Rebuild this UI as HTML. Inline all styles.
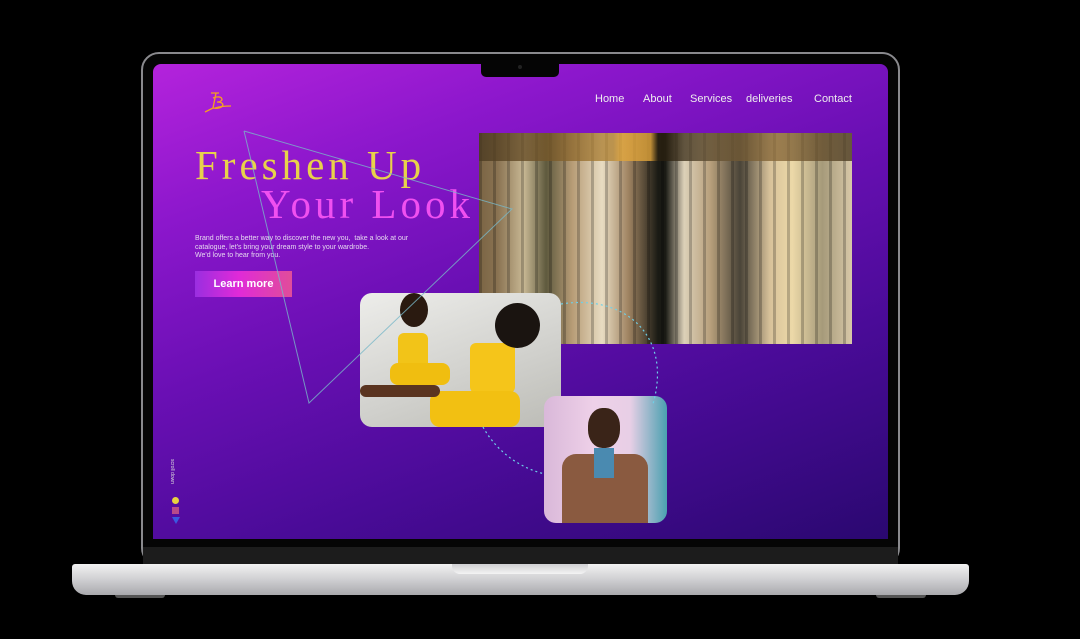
<!DOCTYPE html>
<html><head><meta charset="utf-8"><style>
*{margin:0;padding:0;box-sizing:border-box}
body{width:1080px;height:639px;background:#000;position:relative;overflow:hidden;font-family:"Liberation Sans",sans-serif}
.abs{position:absolute}
.bezel{left:141px;top:52px;width:759px;height:514px;border-radius:18px;background:#050505;border:2px solid #8a8a8e}
.screen{left:153px;top:64px;width:735px;height:475px;border-radius:8px 8px 0 0;overflow:hidden;
background:linear-gradient(160deg,#b423dc 0%,#8c17cc 22%,#6a0fb4 45%,#4a0b98 70%,#2a0870 100%)}
.chin{left:143px;top:547px;width:755px;height:17px;background:#1c1c1c}
.base{left:72px;top:564px;width:897px;height:31px;border-radius:3px 3px 14px 14px;background:linear-gradient(#f2f2f2,#cfcfd2 50%,#a9a9ad)}
.notch{left:452px;top:564px;width:136px;height:10px;background:linear-gradient(#cfcfd2,#f4f4f4);border-radius:0 0 8px 8px}
.cam{left:481px;top:62px;width:78px;height:15px;background:#050505;border-radius:0 0 5px 5px}
.nav{top:29px;color:#eee;font-size:11px;font-family:"Liberation Sans",sans-serif;z-index:5}
h1{position:absolute;font-family:"Liberation Serif",serif;font-weight:normal;font-size:41px;letter-spacing:4px;z-index:3;white-space:nowrap}
.p{left:42px;top:171px;color:#e6d8f0;font-size:7px;line-height:8.5px;font-family:"Liberation Sans",sans-serif}
.btn{left:42px;top:207px;width:97px;height:26px;background:linear-gradient(90deg,#9a2ee0,#e02ad8 45%,#e04d9a);color:#fff;font-size:11px;font-weight:bold;text-align:center;line-height:26px}
.clothes{left:326px;top:69px;width:373px;height:211px;background:
repeating-linear-gradient(90deg,rgba(0,0,0,.22) 0 3px,transparent 3px 14px),
linear-gradient(90deg,#7a6444 0%,#8a7352 5%,#c8b894 12%,#5f5a3e 18%,#b79c76 25%,#e8dcc2 33%,#a08462 40%,#1a1a14 48%,#1a1a14 50%,#dcd0b8 55%,#b8a07c 62%,#4a4438 70%,#d8c29a 78%,#ecd9a8 84%,#a69a7a 92%,#d8c8a8 100%)}
.clothes:before{content:"";position:absolute;left:0;top:0;right:0;height:28px;background:linear-gradient(90deg,#4a3a22,#7a5a2a 20%,#b88a3a 36%,#e0a43a 38%,#e0a43a 46%,#2a2010 48%,#2a2010 50%,#5a4a30 60%,#8a6a3a 80%,#4a3a22);opacity:.8}
.women{left:207px;top:229px;width:201px;height:134px;border-radius:12px;overflow:hidden;background:linear-gradient(160deg,#ededea,#d0d0cc 60%,#bcbcb6)}
.man{left:391px;top:332px;width:123px;height:127px;border-radius:12px;overflow:hidden;background:linear-gradient(90deg,#d9b8d9,#eed0e8 40%,#e8cfe6 70%,#4aa0b0)}
</style></head><body>
<div class="abs bezel"></div>
<div class="abs screen">
 <svg class="abs" style="left:0;top:0;z-index:4" width="735" height="475">
  <polyline points="91,67 359,145 156,339 91,67" fill="none" stroke="#79b8c8" stroke-width="1" opacity=".8"/>
  <path d="M408,240 C470,230 520,270 500,340" fill="none" stroke="#6ed0e8" stroke-width="1.2" stroke-dasharray="2 3"/>
  <path d="M330,363 C345,390 370,405 392,410" fill="none" stroke="#6ed0e8" stroke-width="1.2" stroke-dasharray="2 3"/>
  <path d="M58,29 L66,29 M63,29 L60,44 M60,34 C70,30 72,38 64,38 C74,38 70,46 60,44 C56,46 54,47 52,48 M62,44 C68,42 74,42 78,42" fill="none" stroke="#f5a020" stroke-width="1.3"/>
 </svg>
 <div class="abs nav" style="left:442px">Home</div>
 <div class="abs nav" style="left:490px">About</div>
 <div class="abs nav" style="left:537px">Services</div>
 <div class="abs nav" style="left:593px">deliveries</div>
 <div class="abs nav" style="left:661px">Contact</div>
 <h1 style="left:42px;top:77px;color:#e8d24a">Freshen Up</h1>
 <h1 style="left:108px;top:116px;color:#f050f0">Your Look</h1>
 <div class="abs p">Brand offers a better way to discover the new you,&nbsp; take a look at our<br>catalogue, let's bring your dream style to your wardrobe.<br>We'd love to hear from you.</div>
 <div class="abs btn">Learn more</div>
 <div class="abs clothes"></div>
 <div class="abs women">
  <div class="abs" style="left:38px;top:40px;width:30px;height:38px;background:#f2c418;border-radius:6px"></div>
  <div class="abs" style="left:30px;top:70px;width:60px;height:22px;background:#f0be10;border-radius:8px"></div>
  <div class="abs" style="left:110px;top:50px;width:45px;height:50px;background:#f5c51a;border-radius:6px"></div>
  <div class="abs" style="left:70px;top:98px;width:90px;height:36px;background:#f2c012;border-radius:10px"></div>
  <div class="abs" style="left:135px;top:10px;width:45px;height:45px;background:#1a1410;border-radius:50%"></div>
  <div class="abs" style="left:40px;top:0;width:28px;height:34px;background:#2a1a10;border-radius:50%"></div>
  <div class="abs" style="left:0;top:92px;width:80px;height:12px;background:#5a3420;border-radius:6px"></div>
 </div>
 <div class="abs man">
  <div class="abs" style="left:18px;top:58px;width:86px;height:70px;background:#8a5a40;border-radius:14px 14px 0 0"></div>
  <div class="abs" style="left:44px;top:12px;width:32px;height:40px;background:#3a2418;border-radius:45%"></div>
  <div class="abs" style="left:50px;top:52px;width:20px;height:30px;background:#4a8ab0"></div>
 </div>
 <div class="abs" style="left:14px;top:395px;width:8px;height:35px;color:#ddd;font-size:5px;writing-mode:vertical-rl">scroll down</div>
 <div class="abs" style="left:19px;top:433px;width:7px;height:7px;border-radius:50%;background:#e8d240"></div>
 <div class="abs" style="left:19px;top:443px;width:7px;height:7px;background:#b84a8a"></div>
 <div class="abs" style="left:19px;top:453px;width:0;height:0;border-left:4px solid transparent;border-right:4px solid transparent;border-top:7px solid #3a5ae0"></div>
</div>
<div class="abs cam"><div class="abs" style="left:37px;top:3px;width:4px;height:4px;border-radius:50%;background:#222"></div></div>
<div class="abs chin"></div>
<div class="abs base"></div>
<div class="abs notch"></div>
<div class="abs" style="left:115px;top:595px;width:50px;height:3px;background:#555;border-radius:0 0 3px 3px"></div>
<div class="abs" style="left:876px;top:595px;width:50px;height:3px;background:#555;border-radius:0 0 3px 3px"></div>
</body></html>
